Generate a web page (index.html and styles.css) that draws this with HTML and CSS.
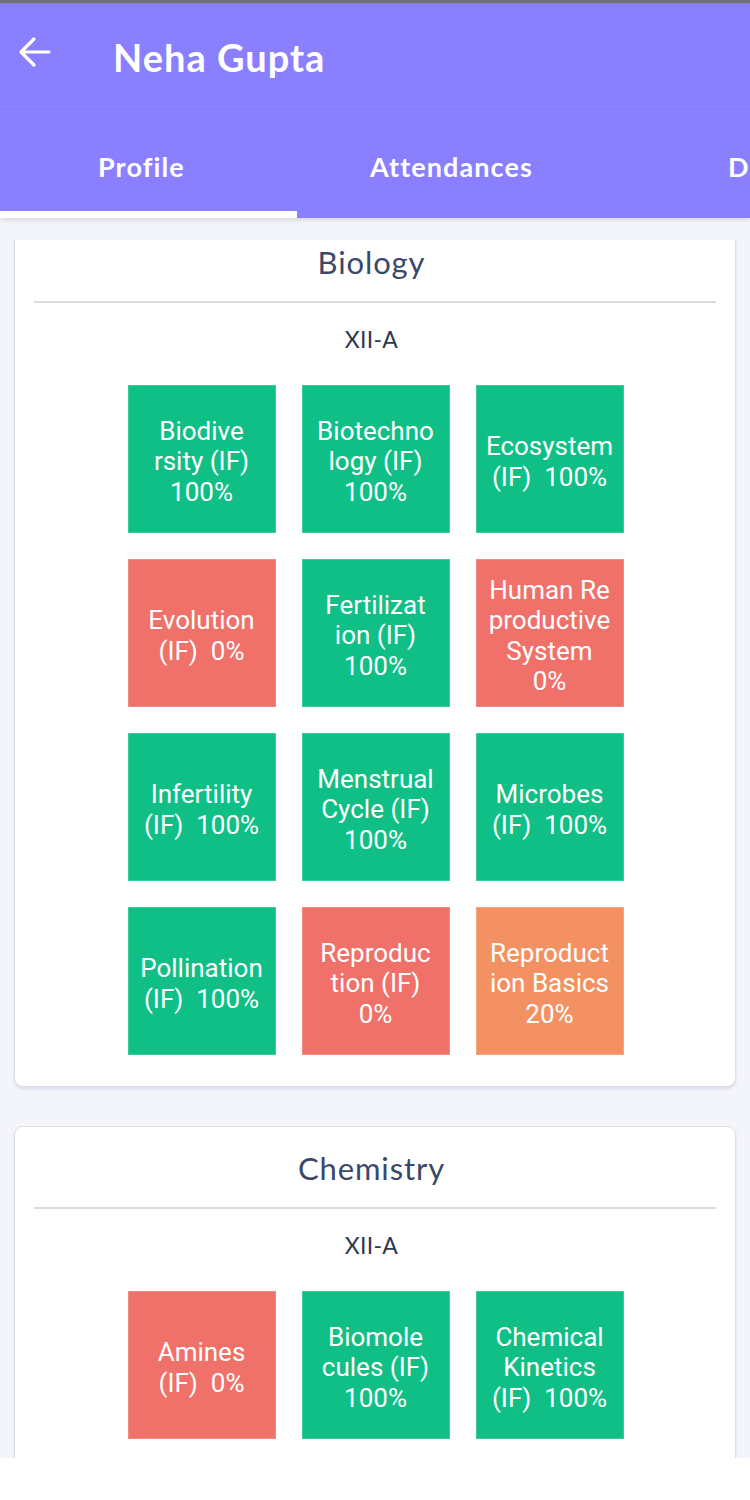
FILE: index.html
```html
<!DOCTYPE html>
<html>
<head>
<meta charset="utf-8">
<link rel="stylesheet" href="styles.css">
</head>
<body>
<div class="screen">
  <div class="statusline"></div>
  <header class="appbar">
    <svg class="back" width="34" height="32" viewBox="0 0 34 32" fill="none" stroke="#fff" stroke-width="3.2" stroke-linecap="round" stroke-linejoin="round">
      <path d="M31 16 H3 M16 3 L3 16 L16 29"/>
    </svg>
    <h1 class="title">Neha Gupta</h1>
  </header>
  <nav class="tabs">
    <div class="tab tab-profile active">Profile</div>
    <div class="tab tab-att">Attendances</div>
    <div class="tab tab-more">D</div>
  </nav>
  <main class="content">
    <div class="scroll">
      <section class="card card-first">
        <h2 class="subject">Biology</h2>
        <hr class="divider">
        <div class="klass">XII-A</div>
        <div class="grid">
          <div class="tile green"><span>Biodive</span><span>rsity (IF)</span><span>100%</span></div>
          <div class="tile green"><span>Biotechno</span><span>logy (IF)</span><span>100%</span></div>
          <div class="tile green"><span>Ecosystem</span><span>(IF)&nbsp; 100%</span></div>
          <div class="tile red"><span>Evolution</span><span>(IF)&nbsp; 0%</span></div>
          <div class="tile green"><span>Fertilizat</span><span>ion (IF)</span><span>100%</span></div>
          <div class="tile red"><span>Human Re</span><span>productive</span><span>System</span><span>0%</span></div>
          <div class="tile green"><span>Infertility</span><span>(IF)&nbsp; 100%</span></div>
          <div class="tile green"><span>Menstrual</span><span>Cycle (IF)</span><span>100%</span></div>
          <div class="tile green"><span>Microbes</span><span>(IF)&nbsp; 100%</span></div>
          <div class="tile green"><span>Pollination</span><span>(IF)&nbsp; 100%</span></div>
          <div class="tile red"><span>Reproduc</span><span>tion (IF)</span><span>0%</span></div>
          <div class="tile orange"><span>Reproduct</span><span>ion Basics</span><span>20%</span></div>
        </div>
      </section>
      <section class="card">
        <h2 class="subject">Chemistry</h2>
        <hr class="divider">
        <div class="klass">XII-A</div>
        <div class="grid">
          <div class="tile red"><span>Amines</span><span>(IF)&nbsp; 0%</span></div>
          <div class="tile green"><span>Biomole</span><span>cules (IF)</span><span>100%</span></div>
          <div class="tile green"><span>Chemical</span><span>Kinetics</span><span>(IF)&nbsp; 100%</span></div>
        </div>
      </section>
    </div>
  </main>
  <div class="bottomfill"></div>
</div>
</body>
</html>
```
FILE: styles.css
```css
* { box-sizing: border-box; }
html, body { margin: 0; padding: 0; }
body {
  width: 750px;
  height: 1500px;
  overflow: hidden;
  background: #ffffff;
  font-family: "Lato", "Noto Sans", sans-serif;
}
.screen {
  width: 750px;
  height: 1500px;
  display: flex;
  flex-direction: column;
}
.statusline {
  height: 3px;
  background: #707070;
  flex: none;
}
.appbar {
  height: 104px;
  flex: none;
  background: #8a80ff;
  display: flex;
  align-items: center;
  border-bottom: 1px solid #9189ff;
}
.back {
  margin-left: 18px;
  margin-top: -6px;
  flex: none;
}
.title {
  margin: 4px 0 0 61px;
  color: #ffffff;
  font-size: 38px;
  font-weight: 700;
  letter-spacing: 1px;
}
.tabs {
  height: 111px;
  flex: none;
  background: #8a80ff;
  display: flex;
  position: relative;
  z-index: 2;
  box-shadow: 0 2px 5px rgba(0, 0, 0, 0.12);
  overflow: hidden;
}
.tab {
  flex: none;
  color: #ffffff;
  font-size: 27px;
  font-weight: 700;
  letter-spacing: 1.1px;
  display: flex;
  align-items: center;
  padding-top: 8px;
}
.tab-profile {
  width: 297px;
  padding-left: 98px;
  border-bottom: 7px solid #ffffff;
  padding-top: 14px;
}
.tab-att {
  width: 431px;
  padding-left: 73px;
}
.tab-more {
  width: 100px;
}
.content {
  flex: none;
  height: 1240px;
  background: #f4f5fa;
  padding-top: 22px;
}
.scroll {
  height: 100%;
  overflow: hidden;
  padding: 0 14px;
}
.card {
  background: #ffffff;
  border: 1px solid #dedfe6;
  border-radius: 9px;
  box-shadow: 0 2px 3px rgba(130, 120, 210, 0.22);
  padding: 21px 19px 31px 19px;
  margin-bottom: 39px;
}
.card-first {
  margin-top: -20px;
}
.subject {
  margin: 0;
  height: 40px;
  line-height: 40px;
  text-align: center;
  font-size: 31px;
  font-weight: 400;
  color: #3b4868;
  letter-spacing: 0.9px;
  padding-right: 7px;
}
.divider {
  margin: 19px 0 0 0;
  border: none;
  height: 2px;
  background: #dcdcdc;
}
.klass {
  margin-top: 21px;
  height: 30px;
  line-height: 30px;
  text-align: center;
  font-size: 23px;
  color: #2f3850;
  letter-spacing: 0.3px;
  padding-right: 7px;
}
.grid {
  margin-top: 31px;
  display: grid;
  grid-template-columns: repeat(3, 148px);
  grid-auto-rows: 148px;
  gap: 26px;
  justify-content: center;
  padding-left: 1px;
}
.tile {
  display: flex;
  flex-direction: column;
  align-items: center;
  justify-content: center;
  color: #ffffff;
  font-family: "Roboto", sans-serif;
  font-size: 26px;
  line-height: 30.5px;
  text-align: center;
  white-space: nowrap;
  padding-top: 5px;
}
.tile span { display: block; }
.green { background: #10bf85; border: 1px solid #3ccb9a; }
.red { background: #ef716a; border: 1px solid #f48a84; }
.orange { background: #f39162; border: 1px solid #f6a57f; }
.bottomfill {
  flex: 1;
  background: #ffffff;
}
```
